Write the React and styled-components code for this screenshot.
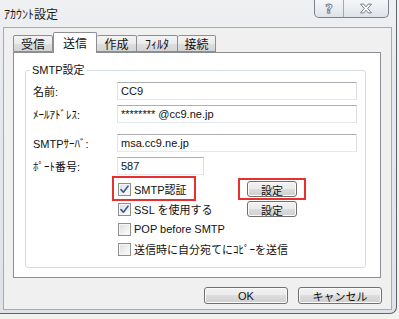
import React from "react";
import styled, { createGlobalStyle } from "styled-components";

const tabs = ["受信", "送信", "作成", "ﾌｨﾙﾀ", "接続"];
const tabWidths = [40, 44, 40, 41, 38];

const App = () => {
  return (
    <>
      <GlobalStyle />
      <StWindow>
        <StTitleBar>
          <StTitle>ｱｶｳﾝﾄ設定</StTitle>
          <StCaption>
            <StCaptionButton $w={28}>
              <StHelpGlyph>?</StHelpGlyph>
            </StCaptionButton>
            <StCaptionButton $w={44} $divider>
              <svg width="14" height="11" viewBox="0 0 12 10">
                <path
                  d="M1 1 L4 1 L6 3.5 L8 1 L11 1 L7.6 5 L11 9 L8 9 L6 6.5 L4 9 L1 9 L4.4 5 Z"
                  fill="#fbfbfb"
                  stroke="#6d7179"
                  strokeWidth="0.8"
                  strokeLinejoin="round"
                />
              </svg>
            </StCaptionButton>
          </StCaption>
        </StTitleBar>

        <StClient>
          <StTabStrip>
            {tabs.map((t, i) => (
              <StTab key={t} $w={tabWidths[i]} $active={i === 1}>
                {t}
              </StTab>
            ))}
          </StTabStrip>

          <StPanel>
            <StGroup>
              <StLegend>SMTP設定</StLegend>

              <StField>
                <StLabel>名前:</StLabel>
                <StInput defaultValue="CC9" />
              </StField>
              <StField $top={5}>
                <StLabel>ﾒｰﾙｱﾄﾞﾚｽ:</StLabel>
                <StInput defaultValue="******** @cc9.ne.jp" />
              </StField>
              <StField $top={11}>
                <StLabel>SMTPｻｰﾊﾞ:</StLabel>
                <StInput defaultValue="msa.cc9.ne.jp" />
              </StField>
              <StField $top={5}>
                <StLabel>ﾎﾟｰﾄ番号:</StLabel>
                <StInput $w={87} defaultValue="587" />
              </StField>

              <StOptions>
                <StOption>
                  <StMark $pad={[3, 7, 2, 4]}>
                    <CheckBox checked />
                    SMTP認証
                  </StMark>
                </StOption>
                <StMark $pad={[1, 7, 1, 7]}>
                  <StButton $w={50}>設定</StButton>
                </StMark>

                <StOption>
                  <CheckBox checked />
                  SSL を使用する
                </StOption>
                <StButton $w={50}>設定</StButton>

                <StOption>
                  <CheckBox />
                  POP before SMTP
                </StOption>
                <span />

                <StOption>
                  <CheckBox />
                  送信時に自分宛てにｺﾋﾟｰを送信
                </StOption>
                <span />
              </StOptions>
            </StGroup>
          </StPanel>

          <StButtonBar>
            <StButton $w={84} $h={17}>OK</StButton>
            <StButton $w={84} $h={17}>キャンセル</StButton>
          </StButtonBar>
        </StClient>
      </StWindow>
    </>
  );
};

const CheckBox = ({ checked }) => (
  <StBox>
    {checked && (
      <svg width="9" height="9" viewBox="0 0 9 9">
        <path
          d="M1 4.6 L3.4 7.2 L8 1.2"
          fill="none"
          stroke="#3d5795"
          strokeWidth="1.6"
          strokeLinecap="round"
          strokeLinejoin="round"
        />
      </svg>
    )}
  </StBox>
);

export default App;

const GlobalStyle = createGlobalStyle`
  html, body {
    margin: 0;
    padding: 0;
    background: #f2f2ef;
  }
  body {
    font-family: "Liberation Sans", "Noto Sans CJK JP", sans-serif;
    font-size: 11px;
    color: #111;
  }
`;

const StWindow = styled.div`
  box-sizing: border-box;
  width: 397px;
  height: 314px;
  display: flex;
  flex-direction: column;
  padding: 0 4px 3px 3px;
  background: linear-gradient(180deg, #eef0f2 0%, #e6e9ed 30%, #dfe3e8 100%);
  border-right: 1px solid #5d626b;
  border-bottom: 1px solid #5d626b;
  border-bottom-right-radius: 7px;
`;

const StTitleBar = styled.div`
  height: 27px;
  display: flex;
  justify-content: space-between;
  align-items: flex-start;
`;

const StTitle = styled.div`
  padding: 5px 0 0 1px;
  font-size: 12px;
  color: #1a1a1a;
`;

const StCaption = styled.div`
  display: flex;
  margin: -1px 3px 0 0;
  height: 18px;
  border: 1px solid #7b828d;
  border-top: none;
  border-radius: 0 0 5px 5px;
  overflow: hidden;
  background: linear-gradient(180deg, #f6f7f9 0%, #e9ecf0 60%, #dde2e8 100%);
`;

const StCaptionButton = styled.div`
  width: ${(p) => p.$w}px;
  display: flex;
  align-items: center;
  justify-content: center;
  border-left: ${(p) => (p.$divider ? "1px solid #a3a9b2" : "none")};
`;

const StHelpGlyph = styled.span`
  font-family: "DejaVu Sans", sans-serif;
  font-weight: bold;
  font-size: 13px;
  color: #fbfbfb;
  -webkit-text-stroke: 0.8px #6d7179;
`;

const StClient = styled.div`
  flex: 1;
  display: flex;
  flex-direction: column;
  background: #f0f0f0;
  border: 1px solid #a4abb4;
  padding: 4px 10px 0 9px;
`;

const StTabStrip = styled.div`
  height: 20px;
  display: flex;
  align-items: flex-end;
`;

const StTab = styled.div`
  box-sizing: border-box;
  width: ${(p) => p.$w}px;
  height: ${(p) => (p.$active ? 21 : 17)}px;
  margin-bottom: ${(p) => (p.$active ? -1 : 0)}px;
  position: relative;
  z-index: ${(p) => (p.$active ? 1 : 0)};
  display: flex;
  align-items: center;
  justify-content: center;
  padding-bottom: ${(p) => (p.$active ? 2 : 0)}px;
  border: 1px solid #8c8e94;
  border-bottom: ${(p) => (p.$active ? "none" : "1px solid #8c8e94")};
  border-left: ${(p) => (p.$active ? "1px solid #8c8e94" : "none")};
  border-radius: 2px 2px 0 0;
  background: ${(p) =>
    p.$active
      ? "#ffffff"
      : "linear-gradient(180deg, #f3f3f3 0%, #ebebeb 50%, #dedede 51%, #d4d4d4 100%)"};
  font-size: 12px;
  &:first-child {
    border-left: 1px solid #8c8e94;
  }
`;

const StPanel = styled.div`
  box-sizing: border-box;
  height: 226px;
  background: #ffffff;
  border: 1px solid #8c8e94;
  padding: 10px 14px 0 11px;
`;

const StGroup = styled.fieldset`
  box-sizing: border-box;
  height: 205px;
  margin: 0;
  padding: 5px 8px 0 7px;
  border: 1px solid #d5dde3;
  border-radius: 3px;
`;

const StLegend = styled.legend`
  padding: 0 2px;
  margin-left: -3px;
  font-size: 11px;
  line-height: 14px;
`;

const StField = styled.div`
  display: flex;
  align-items: center;
  margin-top: ${(p) => p.$top || 0}px;
`;

const StLabel = styled.div`
  width: 84px;
  flex: none;
  font-size: 11px;
`;

const StInput = styled.input`
  box-sizing: border-box;
  width: ${(p) => p.$w || 240}px;
  height: 18px;
  margin: 0;
  padding: 0 3px;
  border: 1px solid;
  border-color: #abadb3 #dbdfe6 #e3e9ef #e2e3ea;
  font-family: "Liberation Sans", "Noto Sans CJK JP", sans-serif;
  font-size: 11px;
  color: #111;
  background: #fff;
  outline: none;
`;

const StOptions = styled.div`
  display: grid;
  grid-template-columns: 130px 50px;
  grid-auto-rows: 20px;
  align-items: center;
  margin: 4px 0 0 84px;
`;

const StOption = styled.label`
  display: flex;
  align-items: center;
  gap: 3px;
  padding-left: 1px;
  font-size: 11px;
  white-space: nowrap;
`;

const StMark = styled.span`
  display: inline-flex;
  align-items: center;
  justify-self: start;
  gap: 3px;
  border: 2px solid #e8302e;
  padding: ${(p) => p.$pad.map((v) => `${v}px`).join(" ")};
  margin: ${(p) => p.$pad.map((v) => `${-(v + 2)}px`).join(" ")};
`;

const StBox = styled.span`
  box-sizing: border-box;
  width: 13px;
  height: 13px;
  flex: none;
  display: inline-flex;
  align-items: center;
  justify-content: center;
  border: 1px solid #8e8f8f;
  background: linear-gradient(135deg, #dcdee3 0%, #f4f4f5 70%, #fbfbfb 100%);
  box-shadow: inset 0 0 0 1px #f6f6f6;
`;

const StButton = styled.button`
  box-sizing: border-box;
  width: ${(p) => p.$w}px;
  height: ${(p) => p.$h || 16}px;
  margin: 0;
  padding: 0;
  border: 1px solid #707070;
  border-radius: 3px;
  background: linear-gradient(180deg, #f2f2f2 0%, #ebebeb 49%, #dddddd 50%, #cfcfcf 100%);
  box-shadow: inset 0 0 0 1px #fbfbfb;
  font-family: "Liberation Sans", "Noto Sans CJK JP", sans-serif;
  font-size: 11px;
  color: #111;
`;

const StButtonBar = styled.div`
  display: flex;
  justify-content: flex-end;
  gap: 10px;
  margin: 9px -1px 0 0;
`;
